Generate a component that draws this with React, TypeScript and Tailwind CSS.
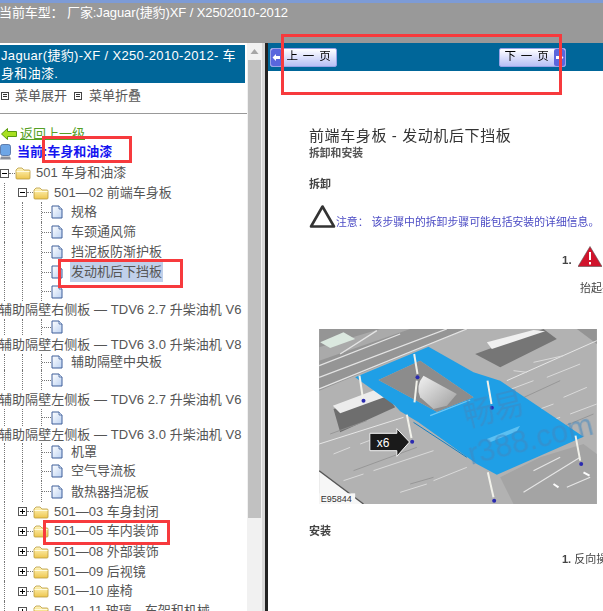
import React from "react";

const FONT = "font-['Liberation_Sans','Noto_Sans_CJK_SC',sans-serif]";

function Folder() {
  return (
    <svg width="16" height="14" viewBox="0 0 16 14" className="shrink-0">
      <defs>
        <linearGradient id="fold" x1="0" y1="0" x2="0" y2="1">
          <stop offset="0" stopColor="#fff6c0" />
          <stop offset="1" stopColor="#eec64e" />
        </linearGradient>
      </defs>
      <path d="M1 4 L3 2 H7 L9 4 H14 Q15 4 15 5 V12 Q15 13 14 13 H2 Q1 13 1 12 Z" fill="url(#fold)" stroke="#b99a3c" strokeWidth="0.8" />
      <path d="M1.5 5.5 H14.5" stroke="#fffbe0" strokeWidth="1" />
    </svg>
  );
}

function FileIcon() {
  return (
    <svg width="12" height="14" viewBox="0 0 12 14" className="shrink-0">
      <defs>
        <linearGradient id="filegrad" x1="0" y1="0" x2="1" y2="1">
          <stop offset="0" stopColor="#ffffff" />
          <stop offset="1" stopColor="#bcd2f2" />
        </linearGradient>
      </defs>
      <path d="M1 1 H8 L11 4 V13 H1 Z" fill="url(#filegrad)" stroke="#3f5f99" strokeWidth="1" />
      <path d="M8 1 V4 H11" fill="#e6eefb" stroke="#3f5f99" strokeWidth="0.8" />
    </svg>
  );
}

function Expander({ open }: { open: boolean }) {
  return (
    <span className="relative w-[9px] h-[9px] shrink-0 border border-[#555] bg-white flex items-center justify-center">
      <span className="w-[5px] h-px bg-black" />
      {!open && <span className="absolute w-px h-[5px] bg-black" />}
    </span>
  );
}

const Guide = ({ w, cls = "" }: { w: number; cls?: string }) => (
  <div className={`self-stretch shrink-0 border-l border-dotted border-[#777] ${cls}`} style={{ width: w }} />
);

function Leaf({ h, text, hi }: { h: number; text?: string; hi?: boolean }) {
  return (
    <div className="flex items-center whitespace-nowrap text-[13px] text-[#555]" style={{ height: h }}>
      <Guide w={18} cls="ml-[4px]" />
      <Guide w={19} />
      <div className="flex items-center self-stretch border-l border-dotted border-[#777] w-[10px] shrink-0">
        <div className="w-full border-t border-dotted border-[#777]" />
      </div>
      <FileIcon />
      {text && (
        <span className={`ml-[7px] px-[1px] h-[20px] leading-[20px] ${hi ? "bg-[#c0d0ea]" : ""}`}>{text}</span>
      )}
    </div>
  );
}

function Long({ h, text }: { h: number; text: string }) {
  return (
    <div className="flex items-center whitespace-nowrap text-[13px] text-[#555] -ml-[1px] tracking-[0.05px]" style={{ height: h }}>
      {text}
    </div>
  );
}

function Closed({ h, text }: { h: number; text: string }) {
  return (
    <div className="flex items-center whitespace-nowrap text-[13px] text-[#555]" style={{ height: h }}>
      <Guide w={14} cls="ml-[4px]" />
      <Expander open={false} />
      <div className="w-[6px] border-t border-dotted border-[#777] shrink-0" />
      <Folder />
      <span className="ml-[5px]">{text}</span>
    </div>
  );
}

function MenuIcon() {
  return (
    <span className="w-[8px] h-[8px] border border-[#444] flex flex-col justify-center gap-px px-px shrink-0">
      <span className="h-px bg-[#333]" />
      <span className="h-px bg-[#333]" />
    </span>
  );
}

function PageButton({ label, next }: { label: string; next?: boolean }) {
  const arrow = (
    <span className="w-[11px] self-stretch bg-[#5a66dd] flex items-center justify-center rounded-[2px] shrink-0">
      <svg width="9" height="9" viewBox="0 0 9 9">
        <path d={next ? "M1 3 H5 V1 L8.5 4.5 L5 8 V6 H1 Z" : "M8 3 H4 V1 L0.5 4.5 L4 8 V6 H8 Z"} fill="#ffffff" />
      </svg>
    </span>
  );
  return (
    <div className="flex items-center h-[19px] w-[67px] rounded-[2px] border border-[#9aa3e6] bg-gradient-to-b from-[#ffffff] to-[#b9c0f5] text-[11.5px] text-black">
      {!next && arrow}
      <span className="flex-1 text-center tracking-[0.8px] whitespace-nowrap">{label}</span>
      {next && arrow}
    </div>
  );
}

function CarPhoto() {
  return (
    <svg viewBox="57 55 833 525" className="w-[278px] h-[175px] block blur-[0.4px]">
      <defs>
        <linearGradient id="cyl" x1="0" y1="0" x2="1" y2="1">
          <stop offset="0" stopColor="#f2f2f2" />
          <stop offset="1" stopColor="#9d9d9d" />
        </linearGradient>
      </defs>
      <rect x="57" y="55" width="833" height="525" fill="#b2b2b2" />
      <path d="M57 55 H500 L57 240 Z" fill="#959595" />
      <path d="M57 150 L330 55 H240 L57 110 Z" fill="#aaaaaa" />
      <path d="M57 235 L500 55 M57 200 L440 55 M57 165 L300 70 M120 130 L230 60" stroke="#e4e4e4" strokeWidth="4" fill="none" />
      <path d="M60 95 L130 65 L165 85 L90 112 Z" fill="#dbe8df" />
      <path d="M525 130 L730 55 L770 85 L600 170 Z" fill="#767676" />
      <path d="M560 95 L700 58 L735 62 L575 115 Z" fill="#f0f0f0" />
      <path d="M100 295 L250 240 L285 290 L120 365 Z" fill="#6e6e6e" />
      <path d="M98 285 L240 232 L285 248 L120 308 Z" fill="#ececec" />
      <path d="M57 480 L190 580 H57 Z" fill="#f7f7f7" />
      <path d="M57 480 L190 580" stroke="#555" strokeWidth="4" />
      <path d="M830 55 L890 100 V55 Z" fill="#949494" />
      <path d="M57 400 L310 320 M620 210 L890 90" stroke="#e6e6e6" strokeWidth="3" fill="none" />
      <path d="M100 430 L150 410 M180 400 L260 370 M130 510 L190 490 M220 480 L400 420 M300 545 L380 520 M400 510 L500 470 M680 310 L760 280 M790 260 L860 230 M700 155 L790 135 M640 180 L680 185 M720 340 L780 320 M810 310 L890 280 M620 240 L700 210 M740 200 L840 160" stroke="#dadada" strokeWidth="3" fill="none" />
      <path d="M160 480 L350 410 M330 520 L400 500 M90 370 L200 330 M650 270 L780 210 M760 360 L880 310" stroke="#929292" strokeWidth="2.5" fill="none" />
      <path d="M600 500 L720 440 L850 400 L890 430 V580 H640 Z" fill="#a4a4a4" />
      <path d="M670 545 L840 440 M700 480 L780 440 M800 530 L870 500" stroke="#e6e6e6" strokeWidth="3.5" fill="none" />
      <path d="M760 520 L775 530 M850 485 L868 495" stroke="#fbfbfb" strokeWidth="6" />
      <path fillRule="evenodd" fill="#1f9fe6" d="M165 200 L385 108 L520 185 L600 210 L850 378 L590 492 L530 460 L355 335 L300 302 L285 285 Z M235 208 L360 150 L520 260 L410 303 Z" />
      <path d="M560 385 L660 345 L650 362 L570 395 Z" fill="#5cc0f2" />
      <path d="M390 315 L510 268" stroke="#6fc8f5" strokeWidth="4" />
      <path d="M340 335 L500 440" stroke="#1580c2" strokeWidth="3" />
      <path d="M235 208 L360 150 L520 260 L410 303 Z" fill="#8c8c8c" />
      <path d="M370 195 L470 250 L440 285 L400 295 L360 260 Q345 225 370 195 Z" fill="url(#cyl)" />
      <g stroke="#f1f1ea" strokeWidth="6">
        <path d="M178 195 L188 262" />
        <path d="M342 130 L352 190" />
        <path d="M562 210 L574 280" />
        <path d="M320 312 L334 382" />
        <path d="M826 375 L840 450" />
        <path d="M563 485 L580 560" />
        <path d="M350 210 L343 275" />
      </g>
      <g fill="#2a2ab0">
        <circle cx="190" cy="270" r="6" />
        <circle cx="352" cy="200" r="6" />
        <circle cx="575" cy="291" r="6" />
        <circle cx="336" cy="393" r="6" />
        <circle cx="843" cy="460" r="6" />
        <circle cx="582" cy="570" r="6" />
      </g>
      <path d="M209 368 H290 V354 L328 394 L290 437 V420 H209 Z" fill="#1a1a1a" stroke="#f5f5f5" strokeWidth="3" />
      <text x="230" y="410" fontSize="36" fill="#ffffff" fontFamily="Liberation Sans">x6</text>
      <rect x="57" y="548" width="108" height="32" fill="#f7f7f7" />
      <text x="62" y="574" fontSize="27" fontFamily="Liberation Sans" fill="#333">E95844</text>
      <g fill="#3f86c0" fillOpacity="0.55" transform="rotate(-14 600 340)">
        <text x="500" y="325" fontSize="92" fontFamily="Noto Sans CJK SC">畅易</text>
        <text x="485" y="438" fontSize="92" fontFamily="Liberation Sans">r388.com</text>
      </g>
    </svg>
  );
}

const RedBox = ({ cls }: { cls: string }) => (
  <div className={`absolute border-[3px] border-[#f73a3d] pointer-events-none ${cls}`} />
);

export default function App() {
  return (
    <div className={`relative w-[603px] h-[611px] overflow-hidden bg-white flex flex-col ${FONT}`}>
      <header className="h-[43px] shrink-0 bg-[#999999] border-t-[3px] border-[#7d9bd6]">
        <p className="text-[13px] leading-[16px] pt-[2px] -ml-[1px] tracking-[-0.1px] text-white whitespace-nowrap">
          当前车型： 厂家:Jaguar(捷豹)XF / X2502010-2012
        </p>
      </header>

      <div className="flex flex-1 min-h-0">
        <aside className="w-[247px] shrink-0 overflow-hidden pt-[2px]">
          <div className="w-[245px] h-[38px] bg-[#006699] text-white text-[13px] leading-[18px] tracking-[0.33px] pl-[1px] pt-[2px]">
            Jaguar(捷豹)-XF / X250-2010-2012- 车身和油漆.
          </div>
          <div className="h-[31px] flex items-center text-[13px] text-[#555] border-b border-[#999] pb-[5px] pl-[1px]">
            <MenuIcon />
            <span className="ml-[6px]">菜单展开</span>
            <span className="ml-[7px]"><MenuIcon /></span>
            <span className="ml-[7px]">菜单折叠</span>
          </div>
          <div className="h-[16px] mt-[12px] flex items-center text-[13px] text-[#55a025] pl-[1px]">
            <svg width="16" height="12" viewBox="0 0 16 12" className="shrink-0">
              <path d="M0.5 6 L6.5 0.5 V3.5 H15.5 V8.5 H6.5 V11.5 Z" fill="#a8e020" stroke="#5a9a10" />
            </svg>
            <span className="ml-[3px] underline">返回上一级</span>
          </div>
          <div className="h-[19px] mb-[2px] flex items-center text-[13px] font-bold text-[#1515f0]">
            <svg width="12" height="16" viewBox="0 0 12 16" className="shrink-0 -ml-[1px]">
              <rect x="1.5" y="0.5" width="10" height="11" rx="2" fill="#6ea6e6" stroke="#395a8f" strokeWidth="0.7" />
              <path d="M2 12.5 H11 L12 15.5 H1 Z" fill="#8a8f9a" />
            </svg>
            <span className="ml-[6px] whitespace-nowrap">当前:车身和油漆</span>
          </div>

          <div className="flex items-center whitespace-nowrap text-[13px] text-[#555] h-[20px]">
            <Expander open />
            <div className="w-[6px] border-t border-dotted border-[#777] shrink-0" />
            <Folder />
            <span className="ml-[5px]">501 车身和油漆</span>
          </div>
          <div className="flex items-center whitespace-nowrap text-[13px] text-[#555] h-[19px]">
            <Guide w={14} cls="ml-[4px]" />
            <Expander open />
            <div className="w-[6px] border-t border-dotted border-[#777] shrink-0" />
            <Folder />
            <span className="ml-[5px]">501—02 前端车身板</span>
          </div>
          <Leaf h={20} text="规格" />
          <Leaf h={20} text="车颈通风筛" />
          <Leaf h={20} text="挡泥板防渐护板" />
          <Leaf h={20} text="发动机后下挡板" hi />
          <Leaf h={19} />
          <Long h={18} text="辅助隔壁右侧板 — TDV6 2.7 升柴油机 V6" />
          <Leaf h={16} />
          <Long h={19} text="辅助隔壁右侧板 — TDV6 3.0 升柴油机 V8" />
          <Leaf h={16} text="辅助隔壁中央板" />
          <Leaf h={20} />
          <Long h={19} text="辅助隔壁左侧板 — TDV6 2.7 升柴油机 V6" />
          <Leaf h={17} />
          <Long h={17} text="辅助隔壁左侧板 — TDV6 3.0 升柴油机 V8" />
          <Leaf h={18} text="机罩" />
          <Leaf h={20} text="空气导流板" />
          <Leaf h={21} text="散热器挡泥板" />
          <Closed h={19} text="501—03 车身封闭" />
          <Closed h={20} text="501—05 车内装饰" />
          <Closed h={21} text="501—08 外部装饰" />
          <Closed h={19} text="501—09 后视镜" />
          <Closed h={20} text="501—10 座椅" />
          <Closed h={20} text="501—11 玻璃、车架和机械" />
        </aside>

        <div className="w-[15px] shrink-0 bg-[#f1f1f1] flex flex-col items-center">
          <svg width="15" height="17" viewBox="0 0 15 17" className="shrink-0">
            <path d="M3.5 11 L7.5 6 L11.5 11 Z" fill="#a6a6a6" />
          </svg>
          <div className="w-[13px] h-[458px] bg-[#c1c1c1]" />
        </div>
        <div className="w-[3px] shrink-0 bg-[#d8d8d8]" />
        <div className="w-[3px] shrink-0 bg-[#222222]" />

        <main className="flex-1 min-w-0 overflow-hidden text-[#444]">
          <div className="h-[28px] bg-[#006699] flex items-center justify-between pl-[2px] pr-[37px] blur-[0.3px]">
            <PageButton label="上 一 页" />
            <PageButton label="下 一 页" next />
          </div>
          <div className="pl-[41px] blur-[0.3px] whitespace-nowrap">
            <h1 className="mt-[55px] text-[15px] leading-[20px] tracking-[0.6px] text-[#333]">前端车身板 - 发动机后下挡板</h1>
            <p className="text-[10.8px] leading-[14px] font-bold text-[#555]">拆卸和安装</p>
            <p className="mt-[17px] text-[11px] leading-[14px] font-bold text-[#444]">拆卸</p>
            <div className="mt-[13px] flex items-end h-[25px]">
              <svg width="27" height="25" viewBox="0 0 27 25" className="shrink-0">
                <path d="M13.5 2.5 L25 22.5 H2 Z" fill="none" stroke="#333" strokeWidth="2.6" strokeLinejoin="round" />
              </svg>
              <span className="text-[10.85px] leading-[14px] text-[#4a4ac4]">注意： 该步骤中的拆卸步骤可能包括安装的详细信息。</span>
            </div>
            <div className="mt-[17px] ml-[253px] flex items-end h-[21px]">
              <span className="text-[11.5px] font-bold text-[#444] mr-[6px] leading-[14px]">1.</span>
              <svg width="24" height="21" viewBox="0 0 24 21" className="shrink-0">
                <path d="M12 0.5 L24 20.5 H0 Z" fill="#d0142c" stroke="#555" strokeWidth="0.6" />
                <path d="M12 6 V14 M12 16 V18.5" stroke="#fff" strokeWidth="2" />
              </svg>
            </div>
            <p className="mt-[14px] ml-[271px] text-[11px] leading-[14px] text-[#444]">抬起并支撑车辆</p>
            <div className="mt-[34px] ml-[10px]">
              <CarPhoto />
            </div>
            <p className="mt-[20px] text-[11px] leading-[14px] font-bold text-[#444]">安装</p>
            <p className="mt-[14px] ml-[253px] text-[11px] leading-[14px] text-[#444]"><b>1.</b> 反向操作</p>
          </div>
        </main>
      </div>

      <RedBox cls="left-[42px] top-[136px] w-[90px] h-[27px]" />
      <RedBox cls="left-[58px] top-[259px] w-[125px] h-[29px]" />
      <RedBox cls="left-[43px] top-[520px] w-[127px] h-[25px]" />
      <RedBox cls="left-[281px] top-[34px] w-[281px] h-[61px]" />
    </div>
  );
}
